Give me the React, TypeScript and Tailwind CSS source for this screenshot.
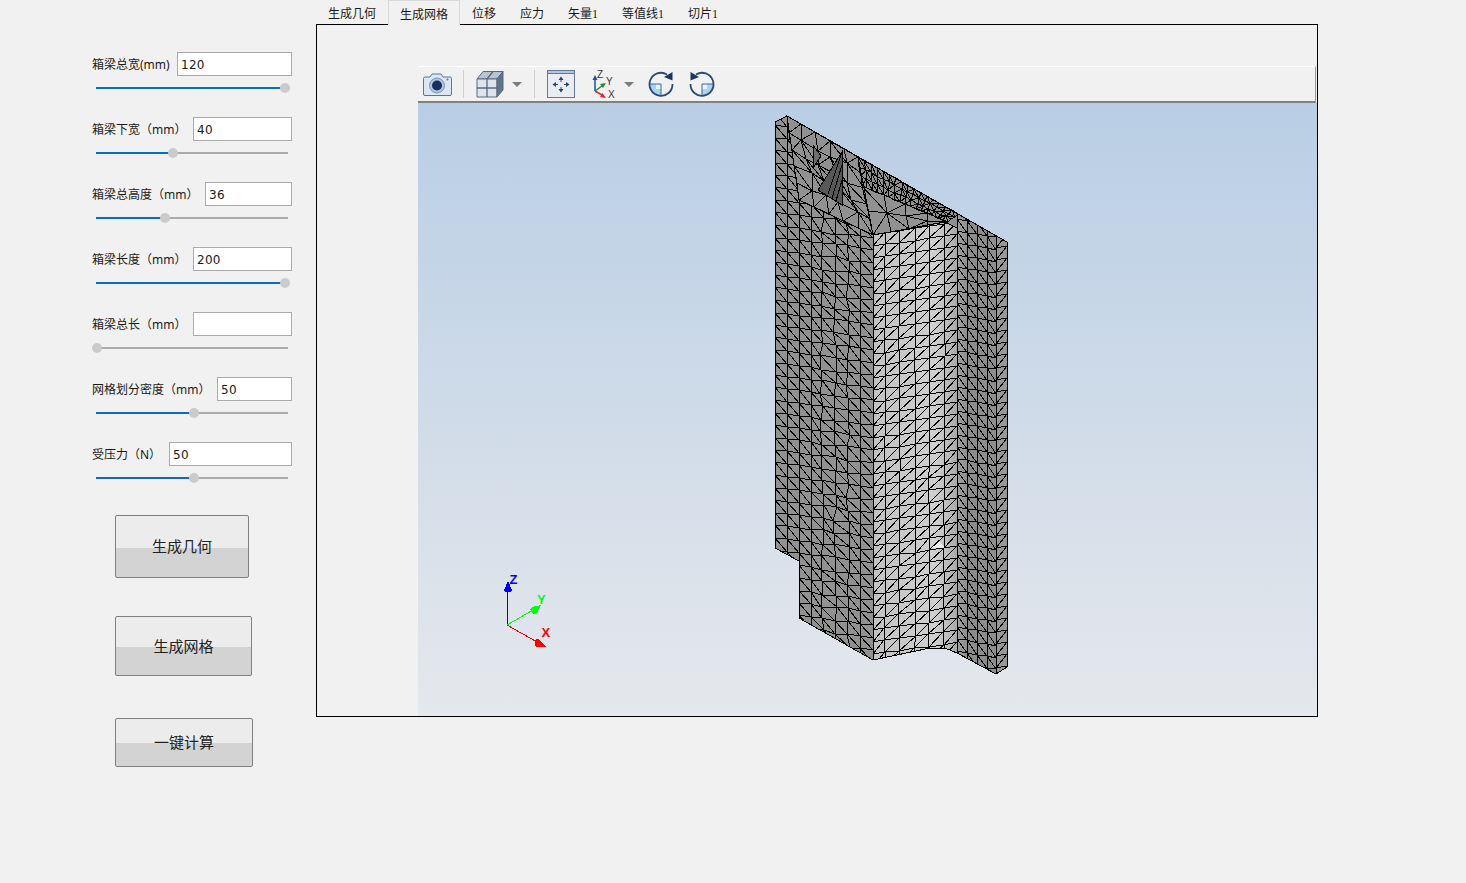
import React, { useMemo } from "react";

type P = [number, number];

function rng(seed: number) {
  let a = seed >>> 0;
  return () => {
    a = (a + 0x6d2b79f5) >>> 0;
    let t = a;
    t = Math.imul(t ^ (t >>> 15), t | 1);
    t ^= t + Math.imul(t ^ (t >>> 7), t | 61);
    return ((t ^ (t >>> 14)) >>> 0) / 4294967296;
  };
}

function seg(a: P, b: P) {
  return `M${Math.round(a[0])} ${Math.round(a[1])}L${Math.round(b[0])} ${Math.round(b[1])}`;
}

// quad-mapped mesh for the irregular upper area
function mesh(tl: P, tr: P, br: P, bl: P, nu: number, nv: number, jit: number, seed: number, altDiag = 0.5) {
  const r = rng(seed);
  const node: P[][] = [];
  for (let i = 0; i <= nu; i++) {
    node.push([]);
    for (let j = 0; j <= nv; j++) {
      const u = i / nu;
      const v = j / nv;
      let x = (1 - v) * ((1 - u) * tl[0] + u * tr[0]) + v * ((1 - u) * bl[0] + u * br[0]);
      let y = (1 - v) * ((1 - u) * tl[1] + u * tr[1]) + v * ((1 - u) * bl[1] + u * br[1]);
      if (i > 0 && i < nu && j > 0 && j < nv) {
        x += (r() - 0.5) * jit;
        y += (r() - 0.5) * jit;
      }
      node[i].push([x, y]);
    }
  }
  let d = "";
  for (let i = 0; i <= nu; i++) {
    for (let j = 0; j <= nv; j++) {
      if (i < nu) d += seg(node[i][j], node[i + 1][j]);
      if (j < nv) d += seg(node[i][j], node[i][j + 1]);
      if (i < nu && j < nv) {
        d += r() < altDiag ? seg(node[i + 1][j], node[i][j + 1]) : seg(node[i][j], node[i + 1][j + 1]);
      }
    }
  }
  return d;
}

// column grid with gently sloped rows, clipped to its face
function grid(
  xs: number[],
  yTop: number,
  yBot: number,
  dy: number,
  slope: number,
  diagDown: boolean,
  jit: (x: number, y: number) => number,
  seed: number,
) {
  const r = rng(seed);
  const nv = Math.ceil((yBot - yTop) / dy);
  const node: P[][] = xs.map((x) => {
    const col: P[] = [];
    for (let j = 0; j <= nv; j++) {
      const y = yTop + j * dy + slope * (x - xs[0]);
      const a = jit(x, y);
      col.push([x + (r() - 0.5) * a, y + (r() - 0.5) * a]);
    }
    return col;
  });
  let d = "";
  for (let i = 0; i < xs.length; i++) {
    for (let j = 0; j <= nv; j++) {
      if (i + 1 < xs.length) d += seg(node[i][j], node[i + 1][j]);
      if (j < nv) d += seg(node[i][j], node[i][j + 1]);
      if (i + 1 < xs.length && j < nv) {
        d += diagDown ? seg(node[i][j], node[i + 1][j + 1]) : seg(node[i + 1][j], node[i][j + 1]);
      }
    }
  }
  return d;
}

const OUTLINE = "775,122 787,116 1007,242 1007,667 996,674 957,653 945,648 930,648 873,660 799,618 799,561 775,548";
const FACE_L = "775,122 787,116 799,123 799,200 873,235 873,660 799,618 799,561 775,548";
const FACE_B = "873,235 945,222 957,228 957,653 945,648 930,648 873,660";
const FACE_R = "957,213 996,236 996,674 957,653";
const FACE_E = "996,236 1007,242 1007,667 996,674";

function Mesh() {
  const m = useMemo(() => {
    const left = grid(
      [775, 787, 799, 811, 822, 835, 848, 860, 873],
      100,
      690,
      12.500,
      0.13,
      true,
      (x) => (x > 815 && x < 855 ? 3.500 : 0.600),
      31,
    );
    const bright = grid(
      [873, 885, 899, 915, 929, 944, 957],
      222,
      690,
      12,
      -0.14,
      false,
      (x) => (x > 873 && x < 957 ? 1.200 : 0),
      32,
    );
    const right = grid([957, 967, 977, 987, 996], 195, 690, 12, 0.17, true, () => 0.800, 33);
    const edge = grid([996, 1007], 236, 690, 12, -0.2, false, () => 0, 34);
    const top = [
      mesh([787, 116], [858, 157], [873, 235], [799, 200], 5, 5, 7, 19, 0.45),
      mesh([858, 157], [958, 214], [948, 222], [862, 186], 16, 3, 1.500, 20, 0.5),
      mesh([862, 186], [948, 222], [945, 222], [873, 235], 4, 2, 4, 21, 0.5),
    ].join("");
    return { left, bright, right, edge, top };
  }, []);
  return (
    <g>
      <defs>
        <linearGradient id="brightFace" gradientUnits="userSpaceOnUse" x1="873" y1="0" x2="957" y2="0">
          <stop offset="0" stopColor="#c2c2c2" />
          <stop offset="0.74" stopColor="#cfcfcf" />
          <stop offset="0.88" stopColor="#bcbcbc" />
          <stop offset="1" stopColor="#a9a9a9" />
        </linearGradient>
        <linearGradient id="rightFace" gradientUnits="userSpaceOnUse" x1="957" y1="0" x2="996" y2="0">
          <stop offset="0" stopColor="#a2a2a2" />
          <stop offset="0.3" stopColor="#8b8b8b" />
          <stop offset="1" stopColor="#8e8e8e" />
        </linearGradient>
        <clipPath id="cl"><polygon points={FACE_L} /></clipPath>
        <clipPath id="cb"><polygon points={FACE_B} /></clipPath>
        <clipPath id="cr"><polygon points={FACE_R} /></clipPath>
        <clipPath id="ce"><polygon points={FACE_E} /></clipPath>
      </defs>
      <polygon points={OUTLINE} fill="#919191" />
      <polygon points={FACE_B} fill="url(#brightFace)" />
      <polygon points={FACE_R} fill="url(#rightFace)" />
      <polygon points="930,548 939,541 945,548" fill="#eeeeee" />
      <polygon points={FACE_E} fill="#979797" />
      <g stroke="#000" strokeWidth={1} fill="none" shapeRendering="crispEdges">
        <path d={m.left} clipPath="url(#cl)" />
        <path d={m.bright} clipPath="url(#cb)" />
        <path d={m.right} clipPath="url(#cr)" />
        <path d={m.edge} clipPath="url(#ce)" />
        <polygon points="787,116 858,157 958,214 957,228 945,222 873,235 799,200" fill="#919191" />
        <path d={m.top} />
        <polygon points={FACE_B} />
      </g>
      <polygon points="842,152 818,190 842,205" fill="#585858" stroke="#000" shapeRendering="crispEdges" />
      <path d="M842 152L828 194M842 165L832 198M842 180L836 201" stroke="#000" fill="none" shapeRendering="crispEdges" />
      <polygon points="813,145 821,156 813,168" fill="#6e6e6e" stroke="#000" shapeRendering="crispEdges" />
      <polygon points={OUTLINE} fill="none" stroke="#000" shapeRendering="crispEdges" />
    </g>
  );
}

function Triad() {
  return (
    <g shapeRendering="crispEdges">
      <path d="M507.500 625V590" stroke="#0000ff" />
      <path d="M507 625L533 610" stroke="#00ff00" />
      <path d="M507 625L537 642" stroke="#ff0000" />
      <path d="M508 581L512 590A4 2 0 0 1 504 590Z" fill="#0000ff" />
      <path d="M532 607L541 605L537 613A3.500 3.500 0 0 1 532 607Z" fill="#00ff00" />
      <path d="M539 639L546 647H538A4 4 0 0 1 539 639Z" fill="#ff0000" />
      <text x="509.500" y="584" fontSize="13" fontWeight="700" fill="#0000ff" fontFamily="Liberation Sans, sans-serif">Z</text>
      <text x="537" y="604" fontSize="13" fontWeight="700" fill="#00ff00" fontFamily="Liberation Sans, sans-serif">Y</text>
      <text x="541.500" y="637" fontSize="13" fontWeight="700" fill="#ff0000" fontFamily="Liberation Sans, sans-serif">X</text>
    </g>
  );
}

function Camera() {
  return (
    <svg width="29" height="25" viewBox="0 0 29 25" className="shrink-0">
      <path d="M2 5h5l2-3h9l2 3h7a1.500 1.500 0 0 1 1.500 1.500V22a1.500 1.500 0 0 1-1.500 1.500H2A1.500 1.500 0 0 1 .5 22V6.500A1.500 1.500 0 0 1 2 5z" fill="#dbe7f3" stroke="#5a7599" />
      <circle cx="14" cy="13.500" r="7.500" fill="#aec5dd" stroke="#7d97b5" />
      <circle cx="14" cy="13.500" r="5" fill="#1b2f5e" />
      <circle cx="24.500" cy="7.500" r="1" fill="#5a7599" />
    </svg>
  );
}

function Cube() {
  return (
    <svg width="28" height="28" viewBox="0 0 28 28" className="shrink-0">
      <polygon points="1,9 7,1.500 27,1.500 21,9" fill="#b8c4d2" stroke="#566a82" />
      <polygon points="1,9 21,9 21,27 1,27" fill="#dfe4ea" stroke="#566a82" />
      <polygon points="21,9 27,1.500 27,20 21,27" fill="#5f7389" stroke="#566a82" />
      <path d="M1 18H21M11 9V27M11 9L17 1.500" stroke="#566a82" strokeWidth="1.300" fill="none" />
    </svg>
  );
}

function Caret() {
  return (
    <svg width="10" height="5" viewBox="0 0 10 5" className="shrink-0">
      <polygon points="0,0 10,0 5,5" fill="#7c7c7c" />
    </svg>
  );
}

function Fit() {
  return (
    <svg width="28" height="28" viewBox="0 0 28 28" className="shrink-0">
      <rect x="0.500" y="0.500" width="27" height="27" fill="#e9ecf1" stroke="#5f7a9c" />
      <rect x="0.500" y="0.500" width="27" height="3" fill="#b5c4d6" stroke="#5f7a9c" />
      <path d="M14 9V12M14 17V20M8 14.500H11M17 14.500H20" stroke="#27456f" />
      <polygon points="14,6.500 11.500,10 16.500,10" fill="#27456f" />
      <polygon points="14,22.500 11.500,19 16.500,19" fill="#27456f" />
      <polygon points="5.500,14.500 9,12 9,17" fill="#27456f" />
      <polygon points="22.500,14.500 19,12 19,17" fill="#27456f" />
    </svg>
  );
}

function Axes() {
  return (
    <svg width="27" height="30" viewBox="0 0 27 30" className="shrink-0">
      <path d="M4 22V10" stroke="#1d4fa3" strokeWidth="1.500" />
      <polygon points="4,6 1.500,11 6.500,11" fill="#1d4fa3" />
      <path d="M4 22L11 17" stroke="#1e8b3d" strokeWidth="1.500" />
      <polygon points="15,14 9,15 12,19" fill="#1e8b3d" />
      <path d="M4 22L11 26" stroke="#d92b2b" strokeWidth="1.500" />
      <polygon points="15,29 9,28 11.500,24" fill="#d92b2b" />
      <text x="6" y="9" fontSize="10" fill="#333" fontFamily="Liberation Sans, sans-serif">Z</text>
      <text x="15" y="15.500" fontSize="10" fill="#333" fontFamily="Liberation Sans, sans-serif">Y</text>
      <text x="17" y="29" fontSize="10" fill="#333" fontFamily="Liberation Sans, sans-serif">X</text>
    </svg>
  );
}

function Rotate({ flip }: { flip?: boolean }) {
  return (
    <svg width="26" height="26" viewBox="0 0 26 26" className="shrink-0" style={flip ? { transform: "scaleX(-1)" } : undefined}>
      <path d="M13 13V24.500A11.500 11.500 0 0 1 1.500 13Z" fill="#a9d3f0" />
      <path d="M8 13H13V18H8Z" fill="#e9f3fb" />
      <path d="M1.500 13H13V24.500" fill="none" stroke="#2f6fa8" />
      <path d="M19 3.500A11.500 11.500 0 1 0 24.500 13" fill="none" stroke="#2b4a73" strokeWidth="1.800" />
      <polygon points="24.500,1 24.500,9.500 16,6" fill="#1d3461" />
    </svg>
  );
}

function Sep() {
  return <div className="h-[28px] w-px shrink-0 bg-[#cfcfcf]" />;
}

const rows: { label: string; val: string; w: string; pos: number }[] = [
  { label: "箱梁总宽(mm)", val: "120", w: "w-[115px]", pos: 189 },
  { label: "箱梁下宽（mm）", val: "40", w: "w-[99px]", pos: 77 },
  { label: "箱梁总高度（mm）", val: "36", w: "w-[87px]", pos: 69 },
  { label: "箱梁长度（mm）", val: "200", w: "w-[99px]", pos: 189 },
  { label: "箱梁总长（mm）", val: "", w: "w-[99px]", pos: 1 },
  { label: "网格划分密度（mm）", val: "50", w: "w-[75px]", pos: 98 },
  { label: "受压力（N）", val: "50", w: "w-[123px]", pos: 98 },
];

const tabs = ["生成几何", "生成网格", "位移", "应力", "矢量1", "等值线1", "切片1"];

function Btn({ label, cls }: { label: string; cls: string }) {
  return (
    <button
      className={`${cls} ml-[23px] flex items-center justify-center rounded-[2px] border border-[#808080] pt-[2px] text-[15px] text-[#222] bg-[linear-gradient(#ececec_0%,#ececec_52%,#d3d3d3_52%,#d3d3d3_100%)]`}
    >
      {label}
    </button>
  );
}

export default function App() {
  return (
    <div
      className="flex h-[883px] w-[1466px] overflow-hidden bg-[#f1f1f1] text-[12px] text-[#1a1a1a]"
      style={{ fontFamily: '"Liberation Serif", "Noto Sans CJK SC", serif' }}
    >
      <aside className="flex w-[316px] shrink-0 flex-col pl-[92px] pr-[24px] pt-[52px]">
        {rows.map((r) => (
          <div key={r.label} className="mb-[28px] flex flex-col">
            <div className="flex h-[24px] items-center justify-between">
              <span className="whitespace-nowrap pt-[2px] font-['Noto_Sans','Noto_Sans_CJK_SC',sans-serif] text-[12px]">{r.label}</span>
              <input
                readOnly
                value={r.val}
                className={`${r.w} h-[24px] shrink-0 border border-[#ababab] bg-white px-[3px] pt-[2px] font-['DejaVu_Sans',sans-serif] text-[12px] tracking-[0.3px] text-[#1a1a1a] outline-none`}
              />
            </div>
            <div className="relative mx-[4px] mt-[11px] h-[2px] bg-[#ababab]">
              <div className="h-full bg-[#0a6cbd]" style={{ width: r.pos }} />
              <div
                className="absolute top-[-4px] h-[10px] w-[10px] -translate-x-1/2 rounded-full bg-[#cbcbcb]"
                style={{ left: r.pos }}
              />
            </div>
          </div>
        ))}
        <div className="mt-[8px]" />
        <Btn label="生成几何" cls="h-[63px] w-[134px] shrink-0" />
        <div className="h-[38px] shrink-0" />
        <Btn label="生成网格" cls="h-[60px] w-[137px] shrink-0" />
        <div className="h-[42px] shrink-0" />
        <Btn label="一键计算" cls="h-[49px] w-[138px] shrink-0" />
      </aside>

      <main className="flex w-[1002px] shrink-0 flex-col">
        <div className="relative z-10 flex h-[25px] shrink-0">
          {tabs.map((t, i) => (
            <div
              key={t}
              className={
                i === 1
                  ? "flex h-[25px] items-center border border-b-0 border-[#d9d9d9] bg-[#f1f1f1] px-[11px] pt-[3px] leading-none"
                  : "flex h-[24px] items-center px-[12px] pt-[4px] leading-none"
              }
            >
              {t}
            </div>
          ))}
        </div>
        <div className="-mt-px flex h-[693px] flex-col border border-black pl-[101px] pt-[41px]">
          <div className="mr-px flex h-[37px] shrink-0 items-center border-t border-r border-b-2 border-t-white border-r-[#999999] border-b-[#808080]">
            <div className="ml-[5px]"><Camera /></div>
            <div className="ml-[11px]"><Sep /></div>
            <div className="ml-[12px]"><Cube /></div>
            <div className="ml-[8px]"><Caret /></div>
            <div className="ml-[12px]"><Sep /></div>
            <div className="ml-[12px]"><Fit /></div>
            <div className="ml-[16px]"><Axes /></div>
            <div className="ml-[6px]"><Caret /></div>
            <div className="ml-[14px]"><Rotate /></div>
            <div className="ml-[15px]"><Rotate flip /></div>
          </div>
          <div className="min-h-0 flex-1 bg-[linear-gradient(#b9cee5,#e5e8ec)]">
            <svg className="block h-full w-full" viewBox="418 103 899 613">
              <Mesh />
              <Triad />
            </svg>
          </div>
        </div>
      </main>
    </div>
  );
}
